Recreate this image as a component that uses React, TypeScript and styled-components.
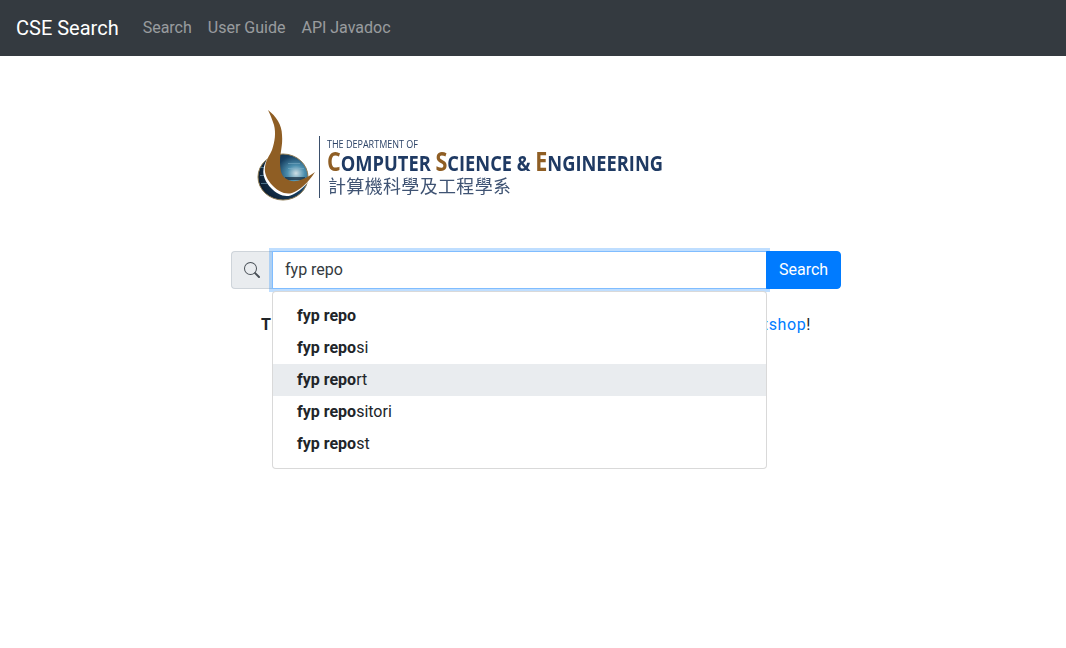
import React from "react";
import styled, { createGlobalStyle } from "styled-components";

const Global = createGlobalStyle`
  html, body, #root { margin: 0; padding: 0; background: #fff; min-height: 100%; height: 100%; }
  body { font-family: Roboto, "Liberation Sans", sans-serif; font-size: 16px; line-height: 1.5; color: #212529; }
  * { box-sizing: border-box; }
`;

const Page = styled.div`
  min-height: 648px;
`;
const Navbar = styled.nav`
  display: flex;
  align-items: center;
  height: 56px;
  padding: 8px 16px;
  background: #343a40;
`;
const Brand = styled.a`
  font-size: 20px;
  line-height: 30px;
  color: #fff;
  margin-right: 16px;
`;
const NavLink = styled.a`
  padding: 8px;
  color: rgba(255, 255, 255, 0.5);
`;
const Main = styled.main`
  display: flex;
  flex-direction: column;
  align-items: center;
  width: 610px;
  margin: 0 0 0 231px;
`;
const Logo = styled.svg`
  display: block;
  align-self: flex-start;
  margin-top: 49px;
  margin-left: 19px;
  filter: blur(0.35px);
`;
const SearchGroup = styled.div`
  position: relative;
  display: flex;
  width: 100%;
  height: 38px;
  margin-top: 46px;
`;
const Addon = styled.span`
  display: flex;
  align-items: center;
  justify-content: center;
  width: 41px;
  background: #e9ecef;
  border: 1px solid #ced4da;
  border-right: 0;
  border-radius: 4px 0 0 4px;
  color: #495057;
`;
const Input = styled.div`
  flex: 1;
  padding: 6px 12px;
  border: 1px solid #80bdff;
  box-shadow: 0 0 0 3px rgba(0, 123, 255, 0.25);
  color: #343a40;
  background: #fff;
  z-index: 1;
`;
const SearchButton = styled.button`
  width: 75px;
  margin-left: -1px;
  padding: 6px 12px;
  font: inherit;
  color: #fff;
  background: #007bff;
  border: 1px solid #007bff;
  border-radius: 0 4px 4px 0;
  z-index: 2;
`;
const Menu = styled.ul`
  position: absolute;
  top: 40px;
  left: 41px;
  width: 495px;
  margin: 0;
  padding: 8px 0;
  list-style: none;
  background: #fff;
  border: 1px solid rgba(0, 0, 0, 0.15);
  border-radius: 4px;
  z-index: 3;
`;
const MenuItem = styled.li<{ $active?: boolean }>`
  height: 32px;
  padding: 4px 24px;
  color: #212529;
  background: ${(p) => (p.$active ? "#e9ecef" : "transparent")};
`;
const Intro = styled.p`
  display: flex;
  justify-content: space-between;
  width: 550px;
  margin: 24px 0 0;
  letter-spacing: 0.6px;
  white-space: nowrap;
  color: #212529;
`;
const Link = styled.a`
  color: #007bff;
`;

const SearchIcon = () => (
  <svg width="16" height="16" viewBox="0 0 16 16" fill="currentColor">
    <path
      fillRule="evenodd"
      d="M10.442 10.442a1 1 0 0 1 1.415 0l3.85 3.85a1 1 0 0 1-1.414 1.415l-3.85-3.85a1 1 0 0 1 0-1.415z"
    />
    <path
      fillRule="evenodd"
      d="M6.5 12a5.5 5.5 0 1 0 0-11 5.5 5.5 0 0 0 0 11zM13 6.5a6.5 6.5 0 1 1-13 0 6.5 6.5 0 0 1 13 0z"
    />
  </svg>
);

const flame =
  "M18 5 C26 11,32 20,32 30 C33 40,30 48,30 56 C30 64,31 70,35 73 C41 78,50 78,65 67 C58 78,50 85,42 88 C35 90,28 86,23 81 C17 75,14 68,15 62 C16 54,20 50,22 45 C25 36,26 28,24 20 C22 14,20 9,18 5 Z";

const CseLogo = () => (
  <Logo width="480" height="100" viewBox="0 0 480 100">
    <defs>
      <radialGradient id="globe" cx="0.76" cy="0.42" r="0.78">
        <stop offset="0" stopColor="#cfe0e6" />
        <stop offset="0.22" stopColor="#4c8fae" />
        <stop offset="0.5" stopColor="#173f60" />
        <stop offset="1" stopColor="#0b1c2e" />
      </radialGradient>
    </defs>
    <ellipse cx="33" cy="72" rx="25" ry="23" fill="url(#globe)" stroke="#8d7a52" strokeWidth="1" />
    <g fill="#7fb0c8" opacity="0.55">
      <rect x="11" y="62" width="6" height="1" />
      <rect x="10" y="70" width="5" height="1" />
      <rect x="11" y="78" width="6" height="1" />
      <rect x="38" y="58" width="12" height="1" />
      <rect x="38" y="63" width="16" height="1" />
    </g>
    <path d="M35 72 h20 v3 h-20 z" fill="#142a3d" opacity="0.7" />
    <path d={flame} fill="#fff" transform="translate(-1.5 2.5)" />
    <path d={flame} fill="#8f5e24" />
    <rect x="69" y="31" width="1" height="62" fill="#3b4f6b" />
    <text x="77" y="43" fontFamily="'Open Sans', sans-serif" fontSize="11" fill="#2b4266" textLength="91" lengthAdjust="spacingAndGlyphs">
      THE DEPARTMENT OF
    </text>
    <text x="77" y="66" fontFamily="'Open Sans', sans-serif" fontSize="22" fontWeight="700" fill="#1f3a63" textLength="336" lengthAdjust="spacingAndGlyphs">
      <tspan fill="#8f5e24" fontSize="26">C</tspan>OMPUTER <tspan fill="#8f5e24" fontSize="26">S</tspan>CIENCE &amp; <tspan fill="#8f5e24" fontSize="26">E</tspan>NGINEERING
    </text>
    <text x="78" y="88" fontFamily="'Noto Sans CJK TC', sans-serif" fontSize="18" fill="#3f5373" textLength="183" lengthAdjust="spacing">
      計算機科學及工程學系
    </text>
  </Logo>
);

const items: [string, string][] = [
  ["fyp repo", ""],
  ["fyp repo", "si"],
  ["fyp repo", "rt"],
  ["fyp repo", "sitori"],
  ["fyp repo", "st"],
];

export default function App() {
  return (
    <Page>
      <Global />
      <Navbar>
        <Brand>CSE Search</Brand>
        <NavLink>Search</NavLink>
        <NavLink>User Guide</NavLink>
        <NavLink>API Javadoc</NavLink>
      </Navbar>
      <Main>
        <CseLogo />
        <SearchGroup>
          <Addon>
            <SearchIcon />
          </Addon>
          <Input>fyp repo</Input>
          <SearchButton>Search</SearchButton>
          <Menu>
            {items.map(([bold, rest], i) => (
              <MenuItem key={i} $active={i === 2}>
                <strong>{bold}</strong>
                {rest}
              </MenuItem>
            ))}
          </Menu>
        </SearchGroup>
        <Intro>
          <strong>Tips</strong>
          <span>
            <Link>Artshop</Link>!
          </span>
        </Intro>
      </Main>
    </Page>
  );
}
